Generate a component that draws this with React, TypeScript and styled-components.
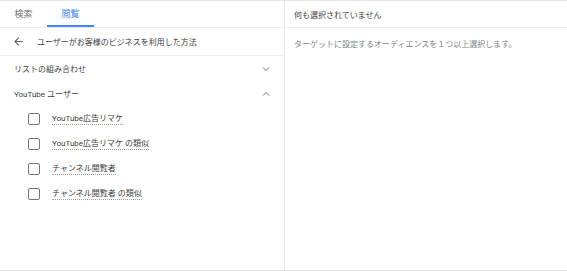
import React from 'react';
import styled, { createGlobalStyle } from 'styled-components';

const GlobalStyle = createGlobalStyle`
  html, body {
    margin: 0;
    padding: 0;
    background: #fff;
  }
  body {
    font-family: Roboto, "Noto Sans CJK JP", sans-serif;
  }
`;

const Frame = styled.div`
  width: 567px;
  height: 271px;
  box-sizing: border-box;
  border-top: 1px solid #e6e6e6;
  border-bottom: 1px solid #e0e0e0;
  display: flex;
  color: #3c4043;
  font-size: 8px;
`;

const LeftPane = styled.div`
  width: 285px;
  box-sizing: border-box;
  border-right: 1px solid #e8e8e8;
  display: flex;
  flex-direction: column;
`;

const RightPane = styled.div`
  flex: 1;
  display: flex;
  flex-direction: column;
`;

const TabBar = styled.div`
  height: 27px;
  box-sizing: border-box;
  border-bottom: 1px solid #ececec;
  display: flex;
`;

const Tab = styled.div<{ $active?: boolean }>`
  width: 47px;
  height: 100%;
  box-sizing: border-box;
  display: flex;
  align-items: center;
  justify-content: center;
  font-size: 9px;
  color: ${(p) => (p.$active ? '#4285f4' : '#757575')};
  border-bottom: 2px solid ${(p) => (p.$active ? '#4285f4' : 'transparent')};
  padding-top: 1px;
`;

const BackRow = styled.div`
  height: 28px;
  box-sizing: border-box;
  border-bottom: 1px solid #ececec;
  display: flex;
  align-items: center;
  padding-left: 12px;
  gap: 12px;
`;

const SectionRow = styled.div`
  height: 25px;
  display: flex;
  align-items: center;
  justify-content: space-between;
  padding: 0 12px 0 14px;
`;

const ItemRow = styled.div`
  height: 25px;
  display: flex;
  align-items: center;
  padding-left: 28px;
  gap: 12px;
`;

const Box = styled.span`
  width: 12px;
  height: 12px;
  box-sizing: border-box;
  border: 1.5px solid #757575;
  border-radius: 2px;
`;

const ItemLabel = styled.span`
  border-bottom: 1px dotted #9e9e9e;
  line-height: 11px;
`;

const RightHeader = styled.div`
  height: 27px;
  box-sizing: border-box;
  border-bottom: 1px solid #ececec;
  display: flex;
  align-items: center;
  padding-left: 9px;
`;

const Hint = styled.div`
  padding: 10px 9px;
  color: #80868b;
`;

const Chevron = ({ up }: { up?: boolean }) => (
  <svg width="12" height="12" viewBox="0 0 24 24" fill="none" stroke="#5f6368" strokeWidth="1.8">
    {up ? <path d="M6 15l6-6 6 6" /> : <path d="M6 9l6 6 6-6" />}
  </svg>
);

const BackArrow = () => (
  <svg width="13" height="13" viewBox="0 0 24 24" fill="#5f6368">
    <path d="M20 11H7.83l5.59-5.59L12 4l-8 8 8 8 1.41-1.41L7.83 13H20v-2z" />
  </svg>
);

const items = ['YouTube広告リマケ', 'YouTube広告リマケ の類似', 'チャンネル閲覧者', 'チャンネル閲覧者 の類似'];

export default function App() {
  return (
    <>
      <GlobalStyle />
      <Frame>
        <LeftPane>
          <TabBar>
            <Tab>検索</Tab>
            <Tab $active>閲覧</Tab>
          </TabBar>
          <BackRow>
            <BackArrow />
            <span>ユーザーがお客様のビジネスを利用した方法</span>
          </BackRow>
          <SectionRow>
            <span>リストの組み合わせ</span>
            <Chevron />
          </SectionRow>
          <SectionRow>
            <span>YouTube ユーザー</span>
            <Chevron up />
          </SectionRow>
          {items.map((label) => (
            <ItemRow key={label}>
              <Box />
              <ItemLabel>{label}</ItemLabel>
            </ItemRow>
          ))}
        </LeftPane>
        <RightPane>
          <RightHeader>何も選択されていません</RightHeader>
          <Hint>ターゲットに設定するオーディエンスを１つ以上選択します。</Hint>
        </RightPane>
      </Frame>
    </>
  );
}
